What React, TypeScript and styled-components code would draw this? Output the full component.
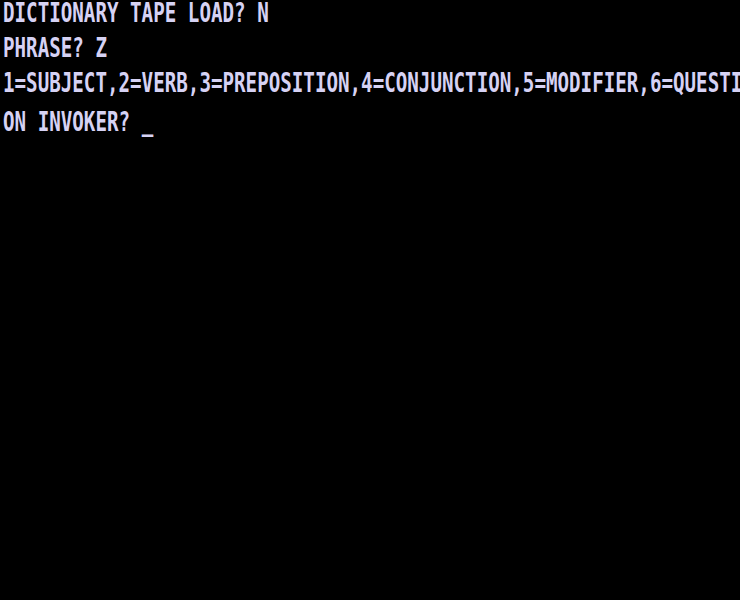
import React from "react";
import styled, { createGlobalStyle } from "styled-components";

const Global = createGlobalStyle`
  html, body { margin: 0; padding: 0; background: #000; }
  #root { min-height: 600px; background: #000; }
`;

const Screen = styled.main`
  width: 740px;
  height: 600px;
  box-sizing: border-box;
  padding: 0 0 0 3px;
  background: #000;
  display: flex;
  flex-direction: column;
  overflow: hidden;
`;

const Line = styled.div<{ $gap?: number }>`
  height: 35px;
  margin-top: ${(p) => p.$gap ?? 0}px;
  flex: none;
  white-space: pre;
  font-family: "DejaVu Sans Mono", "Liberation Mono", monospace;
  font-weight: bold;
  font-size: 19.2px;
  line-height: 28px;
  letter-spacing: 0;
  color: #d6d2f4;
  transform: scaleY(1.34);
  transform-origin: 0 14px;
`;

const Cursor = styled.span`
  color: #d6d2f4;
`;

export default function App() {
  return (
    <>
      <Global />
      <Screen>
        <Line>DICTIONARY TAPE LOAD? N</Line>
        <Line>PHRASE? Z</Line>
        <Line>1=SUBJECT,2=VERB,3=PREPOSITION,4=CONJUNCTION,5=MODIFIER,6=QUESTI</Line>
        <Line $gap={4}>
          ON INVOKER? <Cursor>_</Cursor>
        </Line>
      </Screen>
    </>
  );
}
